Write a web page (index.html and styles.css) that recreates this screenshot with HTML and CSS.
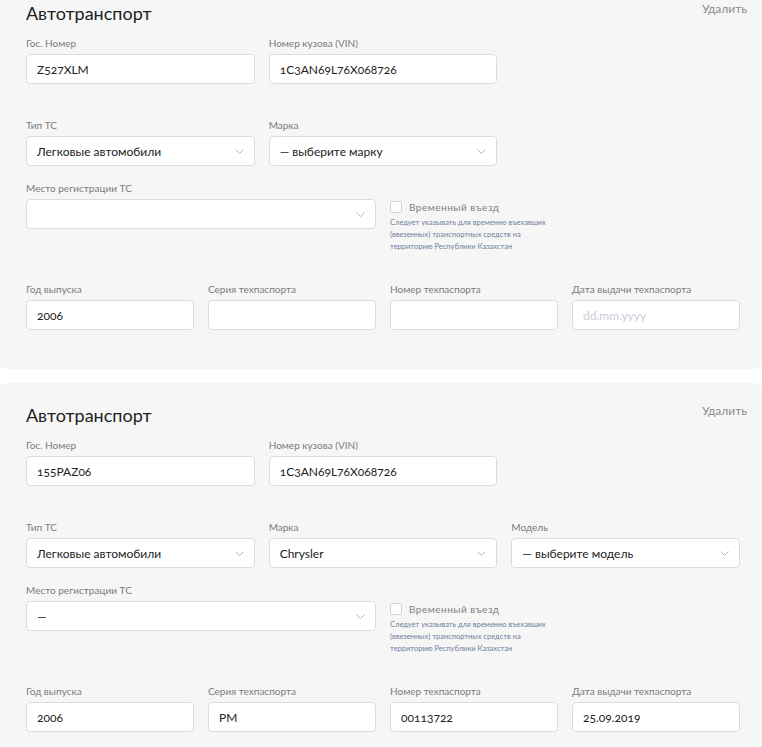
FILE: index.html
```html
<!DOCTYPE html>
<html lang="ru">
<head>
    <meta charset="UTF-8">
    <meta name="viewport" content="width=device-width, initial-scale=1.0">
    <title>Автотранспорт</title>
    <link rel="stylesheet" href="styles.css">
</head>
<body>
<div class="vehicles">
    <!-- Vehicle 1 -->
    <div class="vehicle-card">
        <div class="card-head">
            <h2>Автотранспорт</h2>
            <a href="#" class="remove">Удалить</a>
        </div>
        <div class="row cols-3 row-ids">
            <div class="field">
                <label>Гос. Номер</label>
                <input class="control" type="text" value="Z527XLM">
            </div>
            <div class="field">
                <label>Номер кузова (VIN)</label>
                <input class="control" type="text" value="1C3AN69L76X068726">
            </div>
        </div>
        <div class="row cols-3 row-type">
            <div class="field">
                <label>Тип ТС</label>
                <div class="control select"><span>Легковые автомобили</span><svg width="9" height="5" viewBox="0 0 9 5"><path d="M0.5 0.5 L4.5 4.5 L8.5 0.5" fill="none" stroke="#b5b5b5" stroke-width="1"/></svg></div>
            </div>
            <div class="field">
                <label>Марка</label>
                <div class="control select"><span>— выберите марку</span><svg width="9" height="5" viewBox="0 0 9 5"><path d="M0.5 0.5 L4.5 4.5 L8.5 0.5" fill="none" stroke="#b5b5b5" stroke-width="1"/></svg></div>
            </div>
        </div>
        <div class="row cols-4 row-reg">
            <div class="field span-2">
                <label>Место регистрации ТС</label>
                <div class="control select"><span></span><svg width="9" height="5" viewBox="0 0 9 5"><path d="M0.5 0.5 L4.5 4.5 L8.5 0.5" fill="none" stroke="#b5b5b5" stroke-width="1"/></svg></div>
            </div>
            <div class="temp span-2">
                <label class="check"><span class="box"></span>Временный въезд</label>
                <p class="hint">Следует указывать для временно въехавших (ввезенных) транспортных средств на территорию Республики Казахстан</p>
            </div>
        </div>
        <div class="row cols-4">
            <div class="field">
                <label>Год выпуска</label>
                <input class="control" type="text" value="2006">
            </div>
            <div class="field">
                <label>Серия техпаспорта</label>
                <input class="control" type="text" value="">
            </div>
            <div class="field">
                <label>Номер техпаспорта</label>
                <input class="control" type="text" value="">
            </div>
            <div class="field">
                <label>Дата выдачи техпаспорта</label>
                <input class="control" type="text" placeholder="dd.mm.yyyy">
            </div>
        </div>
    </div>

    <!-- Vehicle 2 -->
    <div class="vehicle-card">
        <div class="card-head">
            <h2>Автотранспорт</h2>
            <a href="#" class="remove">Удалить</a>
        </div>
        <div class="row cols-3 row-ids">
            <div class="field">
                <label>Гос. Номер</label>
                <input class="control" type="text" value="155PAZ06">
            </div>
            <div class="field">
                <label>Номер кузова (VIN)</label>
                <input class="control" type="text" value="1C3AN69L76X068726">
            </div>
        </div>
        <div class="row cols-3 row-type">
            <div class="field">
                <label>Тип ТС</label>
                <div class="control select"><span>Легковые автомобили</span><svg width="9" height="5" viewBox="0 0 9 5"><path d="M0.5 0.5 L4.5 4.5 L8.5 0.5" fill="none" stroke="#b5b5b5" stroke-width="1"/></svg></div>
            </div>
            <div class="field">
                <label>Марка</label>
                <div class="control select"><span>Chrysler</span><svg width="9" height="5" viewBox="0 0 9 5"><path d="M0.5 0.5 L4.5 4.5 L8.5 0.5" fill="none" stroke="#b5b5b5" stroke-width="1"/></svg></div>
            </div>
            <div class="field">
                <label>Модель</label>
                <div class="control select"><span>— выберите модель</span><svg width="9" height="5" viewBox="0 0 9 5"><path d="M0.5 0.5 L4.5 4.5 L8.5 0.5" fill="none" stroke="#b5b5b5" stroke-width="1"/></svg></div>
            </div>
        </div>
        <div class="row cols-4 row-reg">
            <div class="field span-2">
                <label>Место регистрации ТС</label>
                <div class="control select"><span>—</span><svg width="9" height="5" viewBox="0 0 9 5"><path d="M0.5 0.5 L4.5 4.5 L8.5 0.5" fill="none" stroke="#b5b5b5" stroke-width="1"/></svg></div>
            </div>
            <div class="temp span-2">
                <label class="check"><span class="box"></span>Временный въезд</label>
                <p class="hint">Следует указывать для временно въехавших (ввезенных) транспортных средств на территорию Республики Казахстан</p>
            </div>
        </div>
        <div class="row cols-4">
            <div class="field">
                <label>Год выпуска</label>
                <input class="control" type="text" value="2006">
            </div>
            <div class="field">
                <label>Серия техпаспорта</label>
                <input class="control" type="text" value="PM">
            </div>
            <div class="field">
                <label>Номер техпаспорта</label>
                <input class="control" type="text" value="00113722">
            </div>
            <div class="field">
                <label>Дата выдачи техпаспорта</label>
                <input class="control" type="text" value="25.09.2019">
            </div>
        </div>
    </div>
</div>
</body>
</html>
```

FILE: styles.css
```css
/* Basic Reset */
* {
    box-sizing: border-box;
    margin: 0;
    padding: 0;
}

body {
    font-family: Lato, "Open Sans", sans-serif;
    font-variant-numeric: oldstyle-nums;
    background: #fff;
    color: #222;
    overflow: hidden;
}

/* page is scrolled a little */
.vehicles {
    margin-top: -19px;
    display: flex;
    flex-direction: column;
    gap: 14px;
}

/* Card */
.vehicle-card {
    background: #f6f6f6;
    border-radius: 6px;
    padding: 20px 22px 39px 26px;
}

.card-head {
    display: flex;
    justify-content: space-between;
    align-items: flex-start;
    margin-bottom: 12px;
}

.card-head h2 {
    font-size: 18px;
    line-height: 24px;
    font-weight: 400;
    color: #222;
}

.remove {
    margin-top: 1px;
    margin-right: -7px;
    font-size: 12px;
    line-height: 14px;
    color: #8a8a8a;
    text-decoration: none;
}

/* Rows */
.row {
    display: grid;
    column-gap: 14px;
}
.cols-3 { grid-template-columns: repeat(3, 1fr); }
.cols-4 { grid-template-columns: repeat(4, 1fr); }
.span-2 { grid-column: span 2; }

.row-ids { margin-bottom: 35px; }
.row-type { margin-bottom: 16px; }
.row-reg { margin-bottom: 30px; }

.field label {
    display: block;
    font-size: 10px;
    line-height: 12px;
    color: #7b7b7b;
    margin-bottom: 5px;
}

/* Inputs and selects */
.control {
    display: block;
    width: 100%;
    height: 30px;
    background: #fff;
    border: 1px solid #dcdcdc;
    border-radius: 4px;
    padding: 0 10px;
    font-family: inherit;
    font-variant-numeric: oldstyle-nums;
    font-size: 12px;
    color: #222;
    outline: none;
}
.control::placeholder {
    color: #c9ccd6;
}

.select {
    display: flex;
    align-items: center;
    justify-content: space-between;
    padding-right: 10px;
}
.select svg {
    flex-shrink: 0;
}

/* Temporary entry */
.temp {
    padding-top: 19px;
}
.check {
    display: flex;
    align-items: center;
    gap: 7px;
    font-size: 10px;
    line-height: 12px;
    letter-spacing: 0.5px;
    color: #808080;
}
.box {
    width: 12px;
    height: 12px;
    background: #fff;
    border: 1px solid #d6d6d6;
    border-radius: 2px;
}
.hint {
    margin-top: 4px;
    max-width: 160px;
    font-size: 7.5px;
    line-height: 12px;
    color: #6d7e9c;
}
```
